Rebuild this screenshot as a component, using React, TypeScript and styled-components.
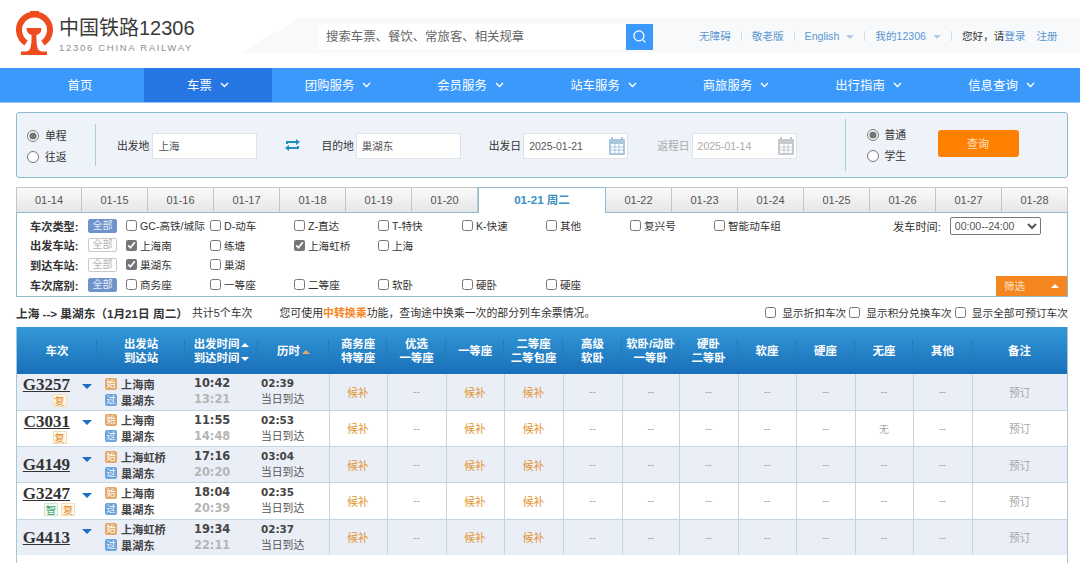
import { ReactNode } from "react";
import styled, { createGlobalStyle } from "styled-components";
import { Search } from "lucide-react";

const FONT = `"Liberation Sans", "Noto Sans CJK SC", sans-serif`;

const GlobalStyle = createGlobalStyle`
  html, body {
    margin: 0;
    background: #fff;
    font-family: ${FONT};
    font-size: 11px;
    color: #333;
  }
  * { box-sizing: border-box; }
`;

const Page = styled.div`
  width: 1080px;
  height: 563px;
  overflow: hidden;
  display: flex;
  flex-direction: column;
`;

/* header */
const Header = styled.header`
  height: 68px;
  flex-shrink: 0;
  display: flex;
  align-items: flex-start;
`;

const LogoBox = styled.div`
  width: 240px;
  flex-shrink: 0;
  padding: 11px 0 0 16px;
  display: flex;
  gap: 5px;
`;

const LogoText = styled.div`
  padding-top: 6px;
`;

const LogoTitle = styled.div`
  font-size: 20px;
  line-height: 22px;
  color: #3a3a3a;
  white-space: nowrap;
`;

const LogoSub = styled.div`
  font-size: 9.5px;
  line-height: 12px;
  letter-spacing: 1.7px;
  color: #8a8f96;
  margin-top: 3px;
  white-space: nowrap;
`;

const TopBand = styled.div`
  flex: 1;
  height: 35px;
  margin-top: 18px;
  background: #f8f9fb;
  clip-path: polygon(60px 0, 100% 0, 100% 100%, 0 100%);
  display: flex;
  align-items: center;
  padding-left: 78px;
`;

const SearchBox = styled.div`
  width: 335px;
  height: 26px;
  margin-top: 2px;
  display: flex;
  background: #fff;
`;

const SearchText = styled.div`
  flex: 1;
  padding-left: 8px;
  font-size: 12.4px;
  line-height: 27px;
  color: #666;
  white-space: nowrap;
`;

const SearchBtn = styled.div`
  width: 27px;
  background: #3b99fc;
  color: #fff;
  display: flex;
  align-items: center;
  justify-content: center;
`;

const TopLinks = styled.div`
  margin-left: 46px;
  display: flex;
  align-items: center;
  font-size: 10.6px;
  color: #5b96d1;
  white-space: nowrap;
`;

const Sep = styled.i`
  width: 1px;
  height: 10px;
  background: #d5dde6;
  margin: 0 10px;
`;

const TinyArrow = styled.i`
  width: 0;
  height: 0;
  margin-left: 7px;
  margin-top: 2px;
  border-left: 4px solid transparent;
  border-right: 4px solid transparent;
  border-top: 4px solid #b5cbe3;
`;

const Hello = styled.span`
  color: #333;
`;

const Register = styled.span`
  margin-left: 11px;
`;

/* nav */
const Nav = styled.nav`
  height: 35px;
  flex-shrink: 0;
  background: #3b99fc;
  display: flex;
  padding-left: 16px;
  border-bottom: 1px solid #8cc4fb;
`;

const NavItem = styled.div<{ $w: number; $active?: boolean }>`
  width: ${(p) => p.$w}px;
  background: ${(p) => (p.$active ? "#2676e3" : "transparent")};
  color: #fff;
  font-size: 12.4px;
  display: flex;
  align-items: center;
  justify-content: center;
  gap: 8px;
`;

/* search form */
const QueryBar = styled.section`
  margin: 9px 12px 0 16px;
  height: 66px;
  flex-shrink: 0;
  background: #eef2f9;
  border: 1px solid #8dbbd0;
  border-radius: 3px;
  display: flex;
  align-items: center;
  font-size: 10.8px;
`;

const RadioGroup = styled.div<{ $w: number; $left: number; $top: number }>`
  width: ${(p) => p.$w}px;
  padding-left: ${(p) => p.$left}px;
  margin-top: ${(p) => p.$top}px;
  flex-shrink: 0;
  display: flex;
  flex-direction: column;
  gap: 7px;
`;

const RadioRow = styled.label`
  display: flex;
  align-items: center;
  gap: 6px;
  line-height: 14px;
`;

const Radio = styled.input.attrs({ type: "radio" })`
  width: 12px;
  height: 12px;
  margin: 0;
  accent-color: #767676;
`;

const VLine = styled.div<{ $h: number; $left?: number }>`
  width: 1px;
  height: ${(p) => p.$h}px;
  margin-left: ${(p) => p.$left ?? 0}px;
  background: #a9cbdc;
  flex-shrink: 0;
`;

const FieldLabel = styled.span<{ $left: number; $muted?: boolean }>`
  margin-left: ${(p) => p.$left}px;
  margin-right: 2px;
  white-space: nowrap;
  color: ${(p) => (p.$muted ? "#a9a9a9" : "#333")};
`;

const TextBox = styled.div<{ $muted?: boolean }>`
  position: relative;
  width: 105px;
  height: 26px;
  margin-top: 2px;
  background: #fff;
  border: 1px solid #dfe3e8;
  padding-left: 5px;
  font-size: 10.5px;
  line-height: 24px;
  color: ${(p) => (p.$muted ? "#aaa" : "#555")};
`;

const CalIcon = styled.svg`
  position: absolute;
  right: 1px;
  top: 3px;
`;

const SwapIcon = styled.svg`
  margin-left: 28px;
  flex-shrink: 0;
`;

const QueryBtn = styled.button`
  width: 81px;
  height: 27px;
  margin-bottom: 4px;
  border: 0;
  border-radius: 3px;
  background: #ff8000;
  color: #fde3c4;
  font: 11px ${FONT};
`;

/* date tabs */
const Tabs = styled.div`
  margin: 9px 12px 0 16px;
  display: flex;
  height: 26px;
  flex-shrink: 0;
`;

const Tab = styled.div<{ $w: number; $active?: boolean }>`
  width: ${(p) => p.$w}px;
  text-align: center;
  font-size: ${(p) => (p.$active ? 11.5 : 11)}px;
  font-weight: ${(p) => (p.$active ? 700 : 400)};
  line-height: 25px;
  color: ${(p) => (p.$active ? "#3a8fc4" : "#555")};
  background: ${(p) =>
    p.$active ? "#fff" : "linear-gradient(#fafafa, #e6e6e6)"};
  border: 1px solid ${(p) => (p.$active ? "#8dbbd0" : "#c4c4c4")};
  border-left-width: ${(p) => (p.$active ? 1 : 0)}px;
  border-bottom: ${(p) => (p.$active ? "0" : "1px solid #8dbbd0")};
  &:first-child {
    border-left-width: 1px;
  }
`;

/* filters */
const Filters = styled.section`
  position: relative;
  margin: 0 12px 0 16px;
  height: 84px;
  flex-shrink: 0;
  padding: 3px 0 0 13px;
  border: 1px solid #8dbbd0;
  border-top: 0;
  display: flex;
  flex-direction: column;
  font-size: 10.6px;
`;

const FilterRow = styled.div`
  height: 19.6px;
  display: flex;
  align-items: center;
`;

const FilterLabel = styled.span`
  width: 58px;
  flex-shrink: 0;
  font-weight: 700;
  font-size: 11.2px;
  color: #333;
`;

const AllBtn = styled.span<{ $on?: boolean }>`
  width: 29px;
  height: 14px;
  line-height: 12px;
  text-align: center;
  flex-shrink: 0;
  border-radius: 2px;
  font-size: 10px;
  border: 1px solid ${(p) => (p.$on ? "#6f93cb" : "#c9c9c9")};
  background: ${(p) => (p.$on ? "#6f93cb" : "#fff")};
  color: ${(p) => (p.$on ? "#e6edf8" : "#b5b5b5")};
  margin-right: 9px;
`;

const Option = styled.label`
  width: 84px;
  flex-shrink: 0;
  display: flex;
  align-items: center;
  gap: 3px;
  white-space: nowrap;
`;

const Check = styled.input.attrs({ type: "checkbox" })`
  width: 11px;
  height: 11px;
  margin: 0;
  flex-shrink: 0;
  accent-color: #767676;
`;

const TimeFilter = styled.div`
  margin-left: 95px;
  display: flex;
  align-items: center;
  gap: 9px;
  font-size: 11.2px;
`;

const TimeSelect = styled.select`
  width: 91px;
  height: 18px;
  font: 10.5px ${FONT};
  color: #555;
  background: #fff;
  border: 1px solid #777;
  border-radius: 2px;
`;

const FoldBtn = styled.div`
  position: absolute;
  right: 0;
  bottom: 0;
  width: 71px;
  height: 20px;
  background: #f5861f;
  color: #fde3c4;
  font-size: 10.5px;
  line-height: 20px;
  padding-left: 8px;
  &::after {
    content: "";
    position: absolute;
    right: 8px;
    top: 8px;
    border-left: 4px solid transparent;
    border-right: 4px solid transparent;
    border-bottom: 4px solid #fff;
  }
`;

/* summary */
const Summary = styled.div`
  margin: 0 12px 0 16px;
  height: 30px;
  flex-shrink: 0;
  display: flex;
  align-items: center;
  font-size: 10.9px;
  white-space: nowrap;
`;

const SummaryMain = styled.b`
  font-size: 11.66px;
  color: #333;
  margin-right: 4px;
`;

const Tip = styled.span`
  margin-left: 27px;
  em {
    font-style: normal;
    font-weight: 700;
    color: #f5861f;
  }
`;

const SummaryRight = styled.div`
  margin-left: auto;
  display: flex;
  align-items: center;
  font-size: 10.7px;
`;

const ShowOption = styled.label`
  display: flex;
  align-items: center;
  gap: 6px;
  margin-left: 3px;
`;

/* results table */
const TableWrap = styled.div`
  flex: 1;
  margin: 0 12px 0 16px;
  border-left: 1px solid #a9c6d8;
  border-right: 1px solid #a9c6d8;
`;

const Table = styled.table`
  width: 1050px;
  border-collapse: collapse;
  table-layout: fixed;
`;

const HeadRow = styled.tr`
  height: 47px;
  background: linear-gradient(#3298d8, #1a6fb8);
`;

const Th = styled.th`
  position: relative;
  padding: 1px 0 0;
  color: #fff;
  font-size: 11.4px;
  font-weight: 700;
  line-height: 14px;
  text-align: center;
  &:not(:last-child)::after {
    content: "";
    position: absolute;
    right: 0;
    top: 12px;
    bottom: 12px;
    width: 1px;
    background: #2a78b5;
  }
`;

const Caret = styled.i<{ $down?: boolean; $dim?: boolean }>`
  display: inline-block;
  width: 0;
  height: 0;
  margin-left: 2px;
  vertical-align: 1px;
  border-left: 4px solid transparent;
  border-right: 4px solid transparent;
  border-${(p) => (p.$down ? "top" : "bottom")}: 4px solid
    ${(p) => (p.$dim ? "#e8a765" : "#fff")};
`;

const Row = styled.tr<{ $odd: boolean }>`
  height: 36.25px;
  background: ${(p) => (p.$odd ? "#eaeef7" : "#fff")};
  border-bottom: 1px solid #c5d6e2;
  &:last-child {
    border-bottom: 0;
  }
`;

const Td = styled.td<{ $tone?: "wait" | "none" | "book" }>`
  padding: 0;
  text-align: center;
  border-right: 1px solid #c5d6e2;
  font-size: ${(p) => (p.$tone === "none" ? 10 : 10.8)}px;
  color: ${(p) =>
    p.$tone === "wait" ? "#e3932d" : p.$tone === "book" ? "#a8a8a8" : "#a5a5a5"};
  &:last-child {
    border-right: 0;
  }
`;

const PlainTd = styled.td`
  padding: 0;
  vertical-align: middle;
`;

const TrainCell = styled.div`
  position: relative;
  height: 34px;
  display: flex;
  flex-direction: column;
  align-items: flex-end;
  justify-content: center;
  padding-right: 1px;
  gap: 1px;
`;

const TrainNo = styled.a`
  margin-right: 26px;
  font: 700 17px/17px "Liberation Serif", serif;
  color: #333;
  text-decoration: underline;
`;

const TrainArrow = styled.i`
  position: absolute;
  right: 5px;
  top: 9px;
  border-left: 5px solid transparent;
  border-right: 5px solid transparent;
  border-top: 5px solid #1f6fc4;
`;

const Badges = styled.div`
  width: 73px;
  display: flex;
  justify-content: center;
  gap: 3px;
`;

const Badge = styled.span<{ $kind: "fu" | "zhi" }>`
  width: 14px;
  height: 13px;
  line-height: 12px;
  font-size: 10.5px;
  text-align: center;
  border: 1px solid ${(p) => (p.$kind === "fu" ? "#f6dfb8" : "#cce6d3")};
  background: ${(p) => (p.$kind === "fu" ? "#fff6e3" : "#f0f9f2")};
  color: ${(p) => (p.$kind === "fu" ? "#e08a2c" : "#3fa364")};
`;

const Stops = styled.div`
  display: flex;
  flex-direction: column;
  gap: 4px;
  padding-left: 8px;
`;

const Stop = styled.div`
  display: flex;
  align-items: center;
  gap: 4px;
  height: 12px;
  font-size: 11.2px;
  font-weight: 700;
  color: #444;
  white-space: nowrap;
`;

const StopIcon = styled.span<{ $start?: boolean }>`
  width: 12px;
  height: 12px;
  border-radius: 2px;
  line-height: 12px;
  font-size: 9px;
  font-weight: 400;
  text-align: center;
  color: #fff;
  background: ${(p) => (p.$start ? "#e3a96a" : "#6ea4dc")};
`;

const TwoLines = styled.div<{ $left: number }>`
  display: flex;
  flex-direction: column;
  gap: 1px;
  padding-left: ${(p) => p.$left}px;
  text-align: left;
`;

const Strong = styled.strong<{ $dim?: boolean; $size: number }>`
  font: 700 ${(p) => p.$size}px/15px "DejaVu Sans", sans-serif;
  color: ${(p) => (p.$dim ? "#b5b5b5" : "#444")};
`;

const Arrive = styled.span`
  font-size: 10.8px;
  line-height: 15px;
  color: #555;
`;

const COLS = [80, 88, 73, 71, 58, 59, 58, 59, 59, 57, 59, 58, 59, 58, 59, 95];

const NAV: [string, number][] = [
  ["首页", 128],
  ["车票", 128],
  ["团购服务", 132],
  ["会员服务", 133],
  ["站车服务", 133],
  ["商旅服务", 132],
  ["出行指南", 133],
  ["信息查询", 133],
];

const DATES_BEFORE = ["01-14", "01-15", "01-16", "01-17", "01-18", "01-19", "01-20"];
const DATES_AFTER = ["01-22", "01-23", "01-24", "01-25", "01-26", "01-27", "01-28"];

const TRAINS = [
  { no: "G3257", from: "上海南", dep: "10:42", arr: "13:21", dur: "02:39", tags: ["复"] },
  { no: "C3031", from: "上海南", dep: "11:55", arr: "14:48", dur: "02:53", tags: ["复"], noSeat: true },
  { no: "G4149", from: "上海虹桥", dep: "17:16", arr: "20:20", dur: "03:04", tags: [] },
  { no: "G3247", from: "上海南", dep: "18:04", arr: "20:39", dur: "02:35", tags: ["智", "复"] },
  { no: "G4413", from: "上海虹桥", dep: "19:34", arr: "22:11", dur: "02:37", tags: [] },
];

function Chevron() {
  return (
    <svg width="9" height="6" viewBox="0 0 9 6" fill="none" stroke="#fff" strokeWidth="1.4">
      <path d="M1 1l3.5 3.5L8 1" />
    </svg>
  );
}

function Logo() {
  return (
    <svg width="38" height="44" viewBox="0 0 38 44">
      <path d="M10.1 32A15.500 15.500 0 1 1 26.900 32" fill="none" stroke="#ee4b1f" strokeWidth="6" />
      <rect x="14" y="0" width="9" height="3" fill="#ee4b1f" />
      <path
        fill="#ee4b1f"
        d="M12.500 17h12c.6 0 1 .4 1 1-.3 3-1.500 5-5 6-.2 6 .2 13 2.200 15 1 1 2.800 1.500 4.800 1.500h3.500V44H5v-3.500h3.500c2 0 3.800-.5 4.800-1.500 2-2 2.400-9 2.200-15-3.500-1-4.700-3-5-6 0-.6.4-1 1-1z"
      />
    </svg>
  );
}

function Calendar({ color }: { color: string }) {
  return (
    <CalIcon width="18" height="19" viewBox="0 0 18 19">
      <rect x="1" y="2" width="16" height="16" rx="1" fill={color} />
      <rect x="3" y="0" width="2" height="4" fill={color} />
      <rect x="13" y="0" width="2" height="4" fill={color} />
      <rect x="3" y="7" width="12" height="9" fill="#fff" />
      <path d="M7 7v9M11 7v9M3 10h12M3 13h12" stroke={color} strokeWidth="1" />
    </CalIcon>
  );
}

function Opt({ children, on }: { children: ReactNode; on?: boolean }) {
  return (
    <Option>
      <Check defaultChecked={on} />
      {children}
    </Option>
  );
}

export default function App() {
  return (
    <Page>
      <GlobalStyle />
      <Header>
        <LogoBox>
          <Logo />
          <LogoText>
            <LogoTitle>中国铁路12306</LogoTitle>
            <LogoSub>12306 CHINA RAILWAY</LogoSub>
          </LogoText>
        </LogoBox>
        <TopBand>
          <SearchBox>
            <SearchText>搜索车票、餐饮、常旅客、相关规章</SearchText>
            <SearchBtn>
              <Search size={15} strokeWidth={2} />
            </SearchBtn>
          </SearchBox>
          <TopLinks>
            无障碍
            <Sep />
            敬老版
            <Sep />
            English
            <TinyArrow />
            <Sep />
            我的12306
            <TinyArrow />
            <Sep />
            <Hello>您好，请</Hello>
            登录
            <Register>注册</Register>
          </TopLinks>
        </TopBand>
      </Header>

      <Nav>
        {NAV.map(([name, w], i) => (
          <NavItem key={name} $w={w} $active={i === 1}>
            {name}
            {i > 0 && <Chevron />}
          </NavItem>
        ))}
      </Nav>

      <QueryBar>
        <RadioGroup $w={78} $left={10} $top={2}>
          <RadioRow>
            <Radio name="way" defaultChecked />
            单程
          </RadioRow>
          <RadioRow>
            <Radio name="way" />
            往返
          </RadioRow>
        </RadioGroup>
        <VLine $h={42} />
        <FieldLabel $left={21}>出发地</FieldLabel>
        <TextBox style={{ marginLeft: 1 }}>上海</TextBox>
        <SwapIcon width="15" height="12" viewBox="0 0 15 12" fill="#1d8fc4">
          <path d="M1 5V2h10V0l4 3-4 3V4H3v1zM14 7v3H4v2L0 9l4-3v2h8V7z" />
        </SwapIcon>
        <FieldLabel $left={21}>目的地</FieldLabel>
        <TextBox>巢湖东</TextBox>
        <FieldLabel $left={28}>出发日</FieldLabel>
        <TextBox>
          2025-01-21
          <Calendar color="#a9c7dc" />
        </TextBox>
        <FieldLabel $left={29} $muted>
          返程日
        </FieldLabel>
        <TextBox $muted>
          2025-01-14
          <Calendar color="#c4c9cd" />
        </TextBox>
        <VLine $h={52} $left={48} />
        <RadioGroup $w={92} $left={21} $top={0}>
          <RadioRow>
            <Radio name="who" defaultChecked />
            普通
          </RadioRow>
          <RadioRow>
            <Radio name="who" />
            学生
          </RadioRow>
        </RadioGroup>
        <QueryBtn>查询</QueryBtn>
      </QueryBar>

      <Tabs>
        {DATES_BEFORE.map((d) => (
          <Tab key={d} $w={66}>
            {d}
          </Tab>
        ))}
        <Tab $w={128} $active>
          01-21 周二
        </Tab>
        {DATES_AFTER.map((d) => (
          <Tab key={d} $w={66}>
            {d}
          </Tab>
        ))}
      </Tabs>

      <Filters>
        <FilterRow>
          <FilterLabel>车次类型:</FilterLabel>
          <AllBtn $on>全部</AllBtn>
          <Opt>GC-高铁/城际</Opt>
          <Opt>D-动车</Opt>
          <Opt>Z-直达</Opt>
          <Opt>T-特快</Opt>
          <Opt>K-快速</Opt>
          <Opt>其他</Opt>
          <Opt>复兴号</Opt>
          <Opt>智能动车组</Opt>
          <TimeFilter>
            发车时间:
            <TimeSelect defaultValue="all">
              <option value="all">00:00--24:00</option>
            </TimeSelect>
          </TimeFilter>
        </FilterRow>
        <FilterRow>
          <FilterLabel>出发车站:</FilterLabel>
          <AllBtn>全部</AllBtn>
          <Opt on>上海南</Opt>
          <Opt>练塘</Opt>
          <Opt on>上海虹桥</Opt>
          <Opt>上海</Opt>
        </FilterRow>
        <FilterRow>
          <FilterLabel>到达车站:</FilterLabel>
          <AllBtn>全部</AllBtn>
          <Opt on>巢湖东</Opt>
          <Opt>巢湖</Opt>
        </FilterRow>
        <FilterRow>
          <FilterLabel>车次席别:</FilterLabel>
          <AllBtn $on>全部</AllBtn>
          <Opt>商务座</Opt>
          <Opt>一等座</Opt>
          <Opt>二等座</Opt>
          <Opt>软卧</Opt>
          <Opt>硬卧</Opt>
          <Opt>硬座</Opt>
        </FilterRow>
        <FoldBtn>筛选</FoldBtn>
      </Filters>

      <Summary>
        <SummaryMain>上海 --&gt; 巢湖东（1月21日 周二）</SummaryMain>
        共计5个车次
        <Tip>
          您可使用<em>中转换乘</em>功能，查询途中换乘一次的部分列车余票情况。
        </Tip>
        <SummaryRight>
          <ShowOption>
            <Check />
            显示折扣车次
          </ShowOption>
          <ShowOption>
            <Check />
            显示积分兑换车次
          </ShowOption>
          <ShowOption>
            <Check />
            显示全部可预订车次
          </ShowOption>
        </SummaryRight>
      </Summary>

      <TableWrap>
        <Table>
          <colgroup>
            {COLS.map((w, i) => (
              <col key={i} width={w} />
            ))}
          </colgroup>
          <thead>
            <HeadRow>
              <Th>车次</Th>
              <Th>
                出发站
                <br />
                到达站
              </Th>
              <Th>
                出发时间
                <Caret />
                <br />
                到达时间
                <Caret $down />
              </Th>
              <Th>
                历时
                <Caret $dim />
              </Th>
              <Th>
                商务座
                <br />
                特等座
              </Th>
              <Th>
                优选
                <br />
                一等座
              </Th>
              <Th>一等座</Th>
              <Th>
                二等座
                <br />
                二等包座
              </Th>
              <Th>
                高级
                <br />
                软卧
              </Th>
              <Th>
                软卧/动卧
                <br />
                一等卧
              </Th>
              <Th>
                硬卧
                <br />
                二等卧
              </Th>
              <Th>软座</Th>
              <Th>硬座</Th>
              <Th>无座</Th>
              <Th>其他</Th>
              <Th>备注</Th>
            </HeadRow>
          </thead>
          <tbody>
            {TRAINS.map((t, i) => (
              <Row key={t.no} $odd={i % 2 === 0}>
                <PlainTd>
                  <TrainCell>
                    <TrainNo>{t.no}</TrainNo>
                    {t.tags.length > 0 && (
                      <Badges>
                        {t.tags.map((tag) => (
                          <Badge key={tag} $kind={tag === "智" ? "zhi" : "fu"}>
                            {tag}
                          </Badge>
                        ))}
                      </Badges>
                    )}
                    <TrainArrow />
                  </TrainCell>
                </PlainTd>
                <PlainTd>
                  <Stops>
                    <Stop>
                      <StopIcon $start>始</StopIcon>
                      {t.from}
                    </Stop>
                    <Stop>
                      <StopIcon>过</StopIcon>
                      巢湖东
                    </Stop>
                  </Stops>
                </PlainTd>
                <PlainTd>
                  <TwoLines $left={9}>
                    <Strong $size={11.4}>{t.dep}</Strong>
                    <Strong $size={11.4} $dim>
                      {t.arr}
                    </Strong>
                  </TwoLines>
                </PlainTd>
                <Td>
                  <TwoLines $left={3}>
                    <Strong $size={10.4}>{t.dur}</Strong>
                    <Arrive>当日到达</Arrive>
                  </TwoLines>
                </Td>
                <Td $tone="wait">候补</Td>
                <Td $tone="none">--</Td>
                <Td $tone="wait">候补</Td>
                <Td $tone="wait">候补</Td>
                <Td $tone="none">--</Td>
                <Td $tone="none">--</Td>
                <Td $tone="none">--</Td>
                <Td $tone="none">--</Td>
                <Td $tone="none">--</Td>
                <Td $tone="none">{t.noSeat ? "无" : "--"}</Td>
                <Td $tone="none">--</Td>
                <Td $tone="book">预订</Td>
              </Row>
            ))}
          </tbody>
        </Table>
      </TableWrap>
    </Page>
  );
}
